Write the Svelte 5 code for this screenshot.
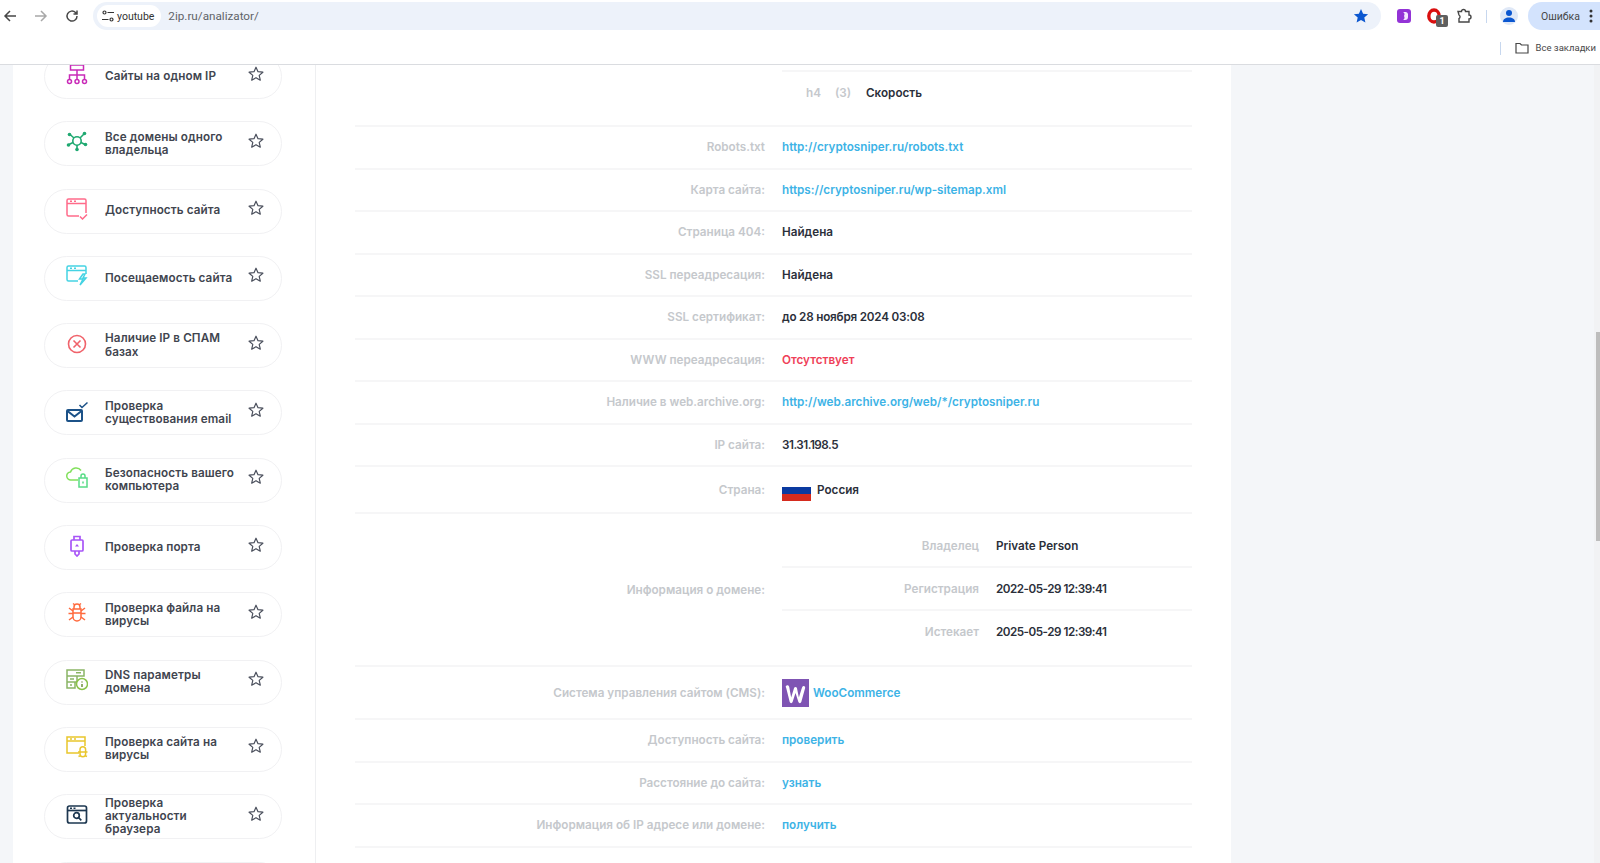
<script>
    // левая колонка сервисов
    const tools = [
        { title: 'Сайты на одном IP', icon: '<g fill="none" stroke="#c92bb8" stroke-width="1.5"><rect x="4.5" y="1" width="13" height="5"/><path d="M11 6v9M3.5 15v-4h15v4"/><circle cx="3.5" cy="17.5" r="2"/><circle cx="11" cy="17.5" r="2"/><circle cx="18.5" cy="17.5" r="2"/></g>' },
        { title: 'Все домены одного\nвладельца', icon: '<g fill="none" stroke="#1fa971" stroke-width="1.6"><circle cx="11" cy="10" r="4.2"/><path d="M8 7 4 3.5M14 7l4-4M7 11.5l-4 2M15 11.5l4 2M11 14v4"/></g><g fill="#1fa971"><circle cx="3.5" cy="3.5" r="1.8"/><circle cx="18.5" cy="2.5" r="1.8"/><circle cx="2.5" cy="14" r="1.8"/><circle cx="19.5" cy="13.5" r="1.8"/><circle cx="11" cy="18.5" r="1.8"/></g>' },
        { title: 'Доступность сайта', icon: '<g fill="none" stroke="#ff6b8a" stroke-width="1.5"><path d="M13 18H2.500A1.500 1.500 0 0 1 1 16.500V2.500A1.500 1.500 0 0 1 2.500 1h16A1.500 1.500 0 0 1 20 2.500V15M1 5.500h19M4 3.300h2M8 3.300h2"/><path d="m14 18.500 2.500 2.500 4.500-4.500"/></g>' },
        { title: 'Посещаемость сайта', icon: '<g fill="none" stroke="#45d3e3" stroke-width="1.5"><path d="M12 16H2.500A1.500 1.500 0 0 1 1 14.500V2.500A1.500 1.500 0 0 1 2.500 1h16A1.500 1.500 0 0 1 20 2.500V9M1 5.500h19M4 3.300h2M8 3.300h2"/><path d="m17 9-3.500 5H17l-3 6 6-7h-3l2-4z"/></g>' },
        { title: 'Наличие IP в СПАМ\nбазах', icon: '<g fill="none" stroke="#f0636b" stroke-width="1.6"><circle cx="11" cy="11" r="8.500"/><path d="m7.500 7.500 7 7M14.500 7.500l-7 7"/></g>' },
        { title: 'Проверка\nсуществования email', icon: '<g fill="none" stroke="#1c5288" stroke-width="2"><rect x="1" y="10" width="15" height="11" rx="1"/><path d="m1.500 11 7 5.500 7-5.500"/></g><path d="m13.500 5 2.500 2.500 5.500-5" fill="none" stroke="#1c5288" stroke-width="1.500"/>' },
        { title: 'Безопасность вашего\nкомпьютера', icon: '<path d="M12 13H5a4 4 0 0 1-.5-8A6 6 0 0 1 15 3.500" fill="none" stroke="#82e05c" stroke-width="1.500"/><g fill="none" stroke="#58dc86" stroke-width="1.500"><rect x="13" y="11" width="8" height="9"/><path d="M15 11V9a2 2 0 0 1 4 0v2M17 14.500v2"/></g>' },
        { title: 'Проверка порта', icon: '<g fill="none" stroke="#a855f7" stroke-width="1.700"><rect x="5" y="5" width="12" height="11" rx="1"/><path d="M8 5V1.500h6V5M9 16v3l2 2 2-2v-3"/></g><path d="M9 11.500 11 9l2 2.500z" fill="#a855f7"/>' },
        { title: 'Проверка файла на\nвирусы', icon: '<g fill="none" stroke="#ff6a3d" stroke-width="1.500"><path d="M7 7h8v8a4 4 0 0 1-8 0zM8 7V5a3 3 0 0 1 6 0v2M7 1.500 9 3M15 1.500 13 3"/><path d="M3 6l4 3M19 6l-4 3M2.500 11.500H7M19.500 11.500H15M3 18l4-3M19 18l-4-3M7 11h8"/></g>' },
        { title: 'DNS параметры\nдомена', icon: '<g fill="none" stroke="#8bb566" stroke-width="1.500"><path d="M1 1h17v6H1zM1 7h10v6H1zM1 13h8v6H1zM10 3.800h5M4 10h4M4 16h2"/></g><circle cx="16" cy="15" r="5.500" fill="#fff" stroke="#8bc34a" stroke-width="1.500"/><path d="M16 12.500v1M16 15v3" stroke="#6d8f3a" stroke-width="1.500"/>' },
        { title: 'Проверка сайта на\nвирусы', icon: '<g fill="none" stroke="#e9c62c" stroke-width="1.500"><path d="M13 17H1V1h18v9M1 5h18M4 3h2M8 3h2"/><path d="M14 13.500a2.800 2.800 0 0 1 5.600 0v4.500a2.800 2.800 0 0 1-5.600 0zM12 16h9.500M12.500 20.500l2-1M21 20.500l-2-1"/></g>' },
        { title: 'Проверка\nактуальности\nбраузера', icon: '<g fill="none" stroke="#1d3750" stroke-width="1.700"><rect x="1.500" y="2" width="19" height="17" rx="2"/><path d="M1.500 6.500h19"/><circle cx="10.500" cy="11.500" r="2.800"/><path d="m12.500 13.500 2.800 2.800"/></g><path d="M4 3.500h2v1.500H4zM7.500 3.500h2v1.500h-2z" fill="#1d3750"/>' },
        { title: '', icon: '' }
    ];

    // строки отчёта
    const rows = [
        { label: 'Robots.txt', value: 'http://cryptosniper.ru/robots.txt', kind: 'link' },
        { label: 'Карта сайта:', value: 'https://cryptosniper.ru/wp-sitemap.xml', kind: 'link' },
        { label: 'Страница 404:', value: 'Найдена' },
        { label: 'SSL переадресация:', value: 'Найдена' },
        { label: 'SSL сертификат:', value: 'до 28 ноября 2024 03:08', kind: 'date' },
        { label: 'WWW переадресация:', value: 'Отсутствует', kind: 'bad' },
        { label: 'Наличие в web.archive.org:', value: 'http://web.archive.org/web/*/cryptosniper.ru', kind: 'link' },
        { label: 'IP сайта:', value: '31.31.198.5', kind: 'num' }
    ];
    const domain = [
        { label: 'Владелец', value: 'Private Person' },
        { label: 'Регистрация', value: '2022-05-29 12:39:41', kind: 'num' },
        { label: 'Истекает', value: '2025-05-29 12:39:41', kind: 'num' }
    ];
    const extra = [
        { label: 'Доступность сайта:', value: 'проверить' },
        { label: 'Расстояние до сайта:', value: 'узнать' },
        { label: 'Информация об IP адресе или домене:', value: 'получить' }
    ];
</script>

<div class="window">
    <header class="chrome">
        <div class="toolbar">
            <svg class="nav" viewBox="0 0 16 16"><path d="M14 8H3M8 3 3 8l5 5" fill="none" stroke="#474747" stroke-width="1.500"/></svg>
            <svg class="nav" viewBox="0 0 16 16"><path d="M2 8h11M8 3l5 5-5 5" fill="none" stroke="#a8a8a8" stroke-width="1.500"/></svg>
            <svg class="nav" viewBox="0 0 16 16"><path d="M13 8a5 5 0 1 1-1.500-3.500L13 6M13 2.500V6H9.500" fill="none" stroke="#474747" stroke-width="1.500"/></svg>
            <div class="omnibox">
                <div class="chip">
                    <svg width="12" height="12" viewBox="0 0 12 12"><g fill="none" stroke="#333" stroke-width="1.200"><circle cx="2.500" cy="2.500" r="1.500"/><circle cx="9.500" cy="9.500" r="1.500"/><path d="M5.500 2.500H12M0 9.500h6.500"/></g></svg>
                    <span>youtube</span>
                </div>
                <span class="url">2ip.ru/analizator/</span>
                <svg class="bookmark" width="16" height="16" viewBox="0 0 16 16"><path d="m8 1 2.100 4.700 5 .5-3.800 3.300 1.100 5L8 12l-4.400 2.500 1.100-5L.9 6.200l5-.5z" fill="#0b57d0"/></svg>
            </div>
            <div class="ext purple"><svg width="14" height="14" viewBox="0 0 14 14"><rect width="14" height="14" rx="3" fill="#9333d6"/><path d="M6 3h3a2.500 2.500 0 0 1 2 2v3a3 3 0 0 1-3 3H6a3 3 0 0 0 1-4 3 3 0 0 0-1-4z" fill="#f4e6ff"/></svg></div>
            <div class="ext opera">
                <svg width="14" height="16" viewBox="0 0 14 16"><ellipse cx="7" cy="8" rx="5.200" ry="6" fill="none" stroke="#d90f0f" stroke-width="3.400"/></svg>
                <span class="badge">1</span>
            </div>
            <div class="ext"><svg width="16" height="16" viewBox="0 0 16 16"><path d="M2 3.500h3.500a2 2 0 0 1 4 0H13v3.500a2 2 0 0 1 0 4V14H3v-3.500a2 2 0 0 0 0-3.500z" fill="none" stroke="#474747" stroke-width="1.400"/></svg></div>
            <div class="divider"></div>
            <div class="avatar"><svg width="14" height="14" viewBox="0 0 14 14"><circle cx="7" cy="4" r="3" fill="#0b57d0"/><path d="M1 13c0-3 2.500-4.500 6-4.500s6 1.500 6 4.500z" fill="#0b57d0"/></svg></div>
            <div class="error">
                <span>Ошибка</span>
                <svg width="4" height="14" viewBox="0 0 4 14"><g fill="#333"><circle cx="2" cy="2" r="1.500"/><circle cx="2" cy="7" r="1.500"/><circle cx="2" cy="12" r="1.500"/></g></svg>
            </div>
        </div>
        <div class="bookmarks">
            <div class="divider"></div>
            <svg width="14" height="12" viewBox="0 0 14 12"><path d="M1 1.500h4l1.500 1.500H13v8H1z" fill="none" stroke="#474747" stroke-width="1.200"/></svg>
            <span>Все закладки</span>
        </div>
    </header>

    <div class="page">
        <aside class="sidebar">
            <ul class="tools">
                {#each tools as tool}
                    <li class="tool">
                        {#if tool.title}
                            <svg class="tool-icon" viewBox="0 0 22 22">{@html tool.icon}</svg>
                            <span class="tool-title">{tool.title}</span>
                            <svg class="star" viewBox="0 0 16 16"><path d="m8 1.200 2 4.500 4.900.5-3.700 3.200 1.100 4.800L8 11.700l-4.300 2.500 1.100-4.800L1.100 6.200 6 5.700z" fill="none" stroke="#4a4f5c" stroke-width="1.200" stroke-linejoin="round"/></svg>
                        {/if}
                    </li>
                {/each}
            </ul>
        </aside>

        <main class="report">
            <div class="row first">
                <div class="label"></div>
                <div class="heading-row">
                    <span class="tag">h4</span>
                    <span class="tag count">(3)</span>
                    <span class="plain">Скорость</span>
                </div>
            </div>

            {#each rows as row}
                <div class="row">
                    <div class="label">{row.label}</div>
                    <div class="value {row.kind ?? ''}">{row.value}</div>
                </div>
            {/each}

            <div class="row country">
                <div class="label">Страна:</div>
                <div class="value flagged">
                    <span class="flag"></span>
                    <span>Россия</span>
                </div>
            </div>

            <div class="row info">
                <div class="label">Информация о домене:</div>
                <div class="nested">
                    {#each domain as item}
                        <div class="nested-row">
                            <div class="label nested-label">{item.label}</div>
                            <div class="value {item.kind ?? ''}">{item.value}</div>
                        </div>
                    {/each}
                </div>
            </div>

            <div class="row cms">
                <div class="label">Система управления сайтом (CMS):</div>
                <div class="value link flagged">
                    <svg width="27" height="28" viewBox="0 0 28 28" preserveAspectRatio="none"><rect width="28" height="28" fill="#7f54b3"/><path d="M4 7c1.500-1.200 3-.8 3.500 1l2 10.500L12.500 9c.5-1.500 2.500-1.500 3 0l2 9.500C19 14 20 10.500 21 8c.8-1.800 3.500-1 3 1l-4 14c-.5 1.500-2.500 1.500-3 0l-3-9-3 9c-.5 1.500-2.500 1.500-3 0L4.500 9.500C4.200 8.500 3.700 7.700 4 7z" fill="#fff"/></svg>
                    <span>WooCommerce</span>
                </div>
            </div>

            {#each extra as row}
                <div class="row">
                    <div class="label">{row.label}</div>
                    <div class="value link">{row.value}</div>
                </div>
            {/each}
        </main>

        <div class="scrollbar"><div class="thumb"></div></div>
    </div>
</div>

<style>
    :global(body) {
        margin: 0;
        background: #f4f6f9;
    }
    .window {
        height: 863px;
        display: flex;
        flex-direction: column;
        overflow: hidden;
        font-family: Inter, "Open Sans", sans-serif;
    }

    /* браузер */
    .chrome {
        height: 65px;
        flex: none;
        box-sizing: border-box;
        background: #fff;
        border-bottom: 1px solid #dadce0;
        font-family: Roboto, "Liberation Sans", sans-serif;
        color: #474747;
    }
    .toolbar {
        height: 32px;
        display: flex;
        align-items: center;
    }
    .nav {
        width: 16px;
        height: 16px;
        margin-left: 2px;
        margin-right: 13px;
        flex: none;
    }
    .omnibox {
        width: 1288px;
        height: 28px;
        box-sizing: border-box;
        padding: 0 12px 0 4px;
        border-radius: 14px;
        background: #edf2fa;
        display: flex;
        align-items: center;
        flex: none;
    }
    .chip {
        height: 22px;
        padding: 0 7px 0 5px;
        background: #fff;
        border-radius: 11px;
        display: flex;
        align-items: center;
        gap: 3px;
        font-size: 10.500px;
        color: #333;
    }
    .url {
        margin-left: 7px;
        font-size: 11.700px;
        color: #5f6368;
    }
    .bookmark {
        margin-left: auto;
    }
    .ext {
        width: 30px;
        display: flex;
        justify-content: center;
        position: relative;
        flex: none;
    }
    .purple {
        margin-left: 8px;
    }
    .badge {
        position: absolute;
        right: 1px;
        top: 7px;
        width: 12px;
        height: 12px;
        border-radius: 2px;
        background: #5f5f5f;
        color: #fff;
        font-size: 9px;
        font-weight: 700;
        line-height: 12px;
        text-align: center;
    }
    .divider {
        width: 1px;
        height: 13px;
        background: #c7d7ee;
        flex: none;
    }
    .toolbar .divider {
        margin-left: 7px;
    }
    .avatar {
        width: 18px;
        height: 18px;
        margin-left: 13px;
        border-radius: 50%;
        background: #dfe8f7;
        display: flex;
        align-items: center;
        justify-content: center;
        flex: none;
    }
    .error {
        margin-left: 10px;
        flex: 1;
        height: 28px;
        padding-left: 13px;
        border-radius: 14px 0 0 14px;
        background: #d3e3fd;
        display: flex;
        align-items: center;
        gap: 9px;
        font-size: 10.500px;
    }
    .bookmarks {
        height: 32px;
        display: flex;
        align-items: center;
        justify-content: flex-end;
        font-size: 9.500px;
        padding-right: 4px;
    }
    .bookmarks span {
        position: relative;
        top: -1px;
    }
    .bookmarks svg {
        margin-left: 14px;
        margin-right: 7px;
    }

    /* страница */
    .page {
        flex: 1;
        min-height: 0;
        display: flex;
        padding-left: 13px;
        overflow: hidden;
    }
    .sidebar {
        width: 302px;
        flex: none;
        background: #fff;
        border-right: 1px solid #eeeff1;
        overflow: hidden;
    }
    .tools {
        list-style: none;
        margin: -11px 0 0;
        padding: 0 33px 0 31px;
        display: flex;
        flex-direction: column;
        gap: 22.300px;
    }
    .tool {
        height: 45px;
        flex: none;
        box-sizing: border-box;
        padding: 0 17px 0 21px;
        border: 1px solid #f1f1f3;
        border-radius: 23px;
        display: flex;
        align-items: center;
    }
    .tool-icon {
        width: 22px;
        height: 22px;
        margin-bottom: 4px;
        flex: none;
    }
    .tool-title {
        margin-left: 17px;
        flex: 1;
        white-space: pre-line;
        font-size: 11.700px;
        font-weight: 600;
        line-height: 13.300px;
        color: #41454f;
        letter-spacing: 0.100px;
    }
    .star {
        width: 16px;
        height: 16px;
        margin-bottom: 6px;
        flex: none;
    }

    /* отчёт */
    .report {
        width: 915px;
        flex: none;
        box-sizing: border-box;
        padding-left: 39px;
        background: #fff;
        font-size: 11.700px;
        font-weight: 600;
    }
    .row {
        width: 837px;
        min-height: 42.500px;
        box-sizing: border-box;
        display: grid;
        grid-template-columns: 410px 1fr;
        column-gap: 17px;
        align-items: center;
        border-bottom: 2px solid #f6f6f7;
    }
    .row.first {
        height: 62px;
        align-items: end;
    }
    .heading-row {
        height: 55px;
        box-sizing: border-box;
        border-top: 2px solid #f6f6f7;
        padding: 0 0 12px 24px;
        display: flex;
        align-items: center;
    }
    .tag {
        color: #c5c8cc;
        width: 29px;
    }
    .tag.count {
        width: 31px;
    }
    .plain {
        color: #2b2f3a;
    }
    .label {
        text-align: right;
        color: #c5c8cc;
    }
    .value {
        color: #2b2f3a;
    }
    .link {
        color: #3db3e6;
    }
    .bad {
        color: #ef4058;
    }
    .num {
        letter-spacing: -0.500px;
    }
    .date {
        letter-spacing: -0.200px;
    }
    .flagged {
        display: flex;
        align-items: center;
        gap: 6px;
    }
    .flag {
        width: 29px;
        height: 22px;
        background: linear-gradient(#fff 0 8px, #0a3aa0 8px 15px, #d52b1e 15px);
    }
    .cms .flagged {
        gap: 4px;
    }
    .row.country {
        min-height: 47px;
    }
    .row.info {
        min-height: 153px;
    }
    .row.cms {
        min-height: 53px;
    }
    .nested-row {
        height: 42.500px;
        box-sizing: border-box;
        display: grid;
        grid-template-columns: 197px 1fr;
        column-gap: 17px;
        align-items: center;
        border-bottom: 2px solid #f6f6f7;
    }
    .nested-row:last-child {
        border-bottom: none;
    }
    .scrollbar {
        margin-left: auto;
        width: 6px;
        background: #f1f2f4;
        flex: none;
    }
    .thumb {
        width: 4px;
        height: 209px;
        margin: 267px 0 0 2px;
        background: #bdbdbd;
    }
</style>
